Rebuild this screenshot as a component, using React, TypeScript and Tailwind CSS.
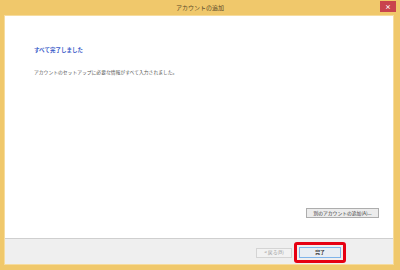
export default function App() {
  return (
    <div
      className="flex h-[270px] w-[400px] flex-col bg-[#f0c86b]"
      style={{ fontFamily: '"Noto Sans CJK JP", "Noto Sans", sans-serif' }}
    >
      <div className="relative flex h-[15px] items-center justify-center">
        <span className="text-[6px] leading-none text-[#5a4a2a]">アカウントの追加</span>
        <div className="absolute right-[4px] top-[1px] flex h-[11px] w-[16px] items-center justify-center bg-[#c9434d] text-[6px] font-bold leading-none text-white">
          ×
        </div>
      </div>

      <div className="mx-[4px] mr-[6px] mb-[5px] flex flex-1 flex-col border border-[#f6dc9e] bg-white">
        <div className="flex-1 px-[29px] pt-[32px]">
          <p className="text-[5.5px] font-bold leading-none text-[#3a5cc9]">すべて完了しました</p>
          <p className="mt-[16px] text-[4.8px] leading-none text-[#555]">
            アカウントのセットアップに必要な情報がすべて入力されました。
          </p>
        </div>
        <div className="flex justify-end pb-[20px] pr-[14px]">
          <button className="flex h-[10px] w-[73px] items-center justify-center border border-[#adadad] bg-[#ececec] text-[4.8px] leading-none text-[#333]">
            別のアカウントの追加(A)...
          </button>
        </div>
        <div className="flex h-[26px] items-center justify-end border-t border-[#cfcfcf] bg-[#efefef] pr-[47px] pt-[2px]">
          <button className="flex h-[10px] w-[36px] items-center justify-center border border-[#d4d4d4] bg-[#f2f2f2] text-[4.8px] leading-none text-[#9a9a9a]">
            &lt; 戻る(B)
          </button>
          <div className="ml-[2px] rounded-[3px] border-[3px] border-[#e60012] px-[2px] py-[2px]">
            <button className="flex h-[11px] w-[42px] items-center justify-center border border-[#7eb4ea] bg-[#e8eef4] text-[4.8px] font-bold leading-none text-[#333]">
              完了
            </button>
          </div>
        </div>
      </div>
    </div>
  );
}
